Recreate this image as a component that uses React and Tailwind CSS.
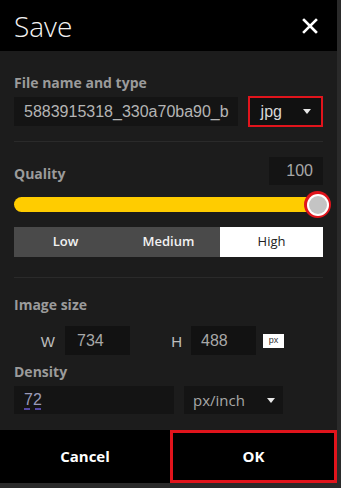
import React from "react";

const label = "font-['Open_Sans',sans-serif] font-bold text-[14px] text-[#9b9b9b] leading-none";

const Caret = () => (
  <svg width="8" height="5" viewBox="0 0 8 5" className="shrink-0">
    <path d="M0 0h8L4 5z" fill="#e8e8e8" />
  </svg>
);

export default function App() {
  return (
    <div className="w-[341px] h-[488px] bg-[#2a2a2a] flex flex-col overflow-hidden">
      <div className="w-[337px] flex-1 flex flex-col bg-[#1c1c1c]">
        {/* Header */}
        <div className="h-[51px] bg-black flex items-center justify-between pl-[14px] pr-[19px]">
          <span className="font-['Open_Sans',sans-serif] font-light text-[28px] text-[#f2f2f2] leading-none">Save</span>
          <svg width="16" height="16" viewBox="0 0 16 16">
            <path d="M2 2L14 14M14 2L2 14" stroke="#ffffff" strokeWidth="2.6" strokeLinecap="square" />
          </svg>
        </div>

        <div className="flex flex-col px-[14px]">
          {/* File name */}
          <div className={`${label} mt-[25px]`}>File name and type</div>
          <div className="flex items-center gap-[10px] mt-[6px]">
            <div className="w-[226px] h-[29px] bg-[#141414] flex items-center pl-[10px] font-['Liberation_Sans',sans-serif] text-[16px] text-[#b5b5b5] overflow-hidden whitespace-nowrap">
              5883915318_330a70ba90_b
            </div>
            <div className="w-[76px] h-[31px] border-[2px] border-[#e1141c] bg-[#111111] flex items-center justify-between pl-[11px] pr-[10px]">
              <span className="font-['Liberation_Sans',sans-serif] text-[16px] text-[#d8d8d8]">jpg</span>
              <Caret />
            </div>
          </div>
          <div className="h-px bg-[#2a2a2a] mt-[14px]" />

          {/* Quality */}
          <div className="flex items-center justify-between mt-[15px]">
            <span className={`${label} mt-[6px]`}>Quality</span>
            <div className="w-[54px] h-[28px] bg-[#141414] flex items-center justify-end pr-[10px] font-['Liberation_Sans',sans-serif] text-[16px] text-[#a8a8a8]">100</div>
          </div>
          <div className="relative h-[27px] mt-[6px] flex items-center">
            <div className="w-[312px] h-[15px] rounded-full bg-[#ffcc00]" />
            <div className="absolute right-[-8px] top-[0px] w-[27px] h-[27px] rounded-full bg-[#e0141c] flex items-center justify-center">
              <div className="w-[22px] h-[22px] rounded-full bg-white flex items-center justify-center">
                <div className="w-[18px] h-[18px] rounded-full bg-[#c4c4c4]" />
              </div>
            </div>
          </div>
          <div className="grid grid-cols-3 h-[30px] mt-[9px] font-['Open_Sans',sans-serif] text-[13px]">
            <div className="bg-[#4a4a4a] flex items-center justify-center font-semibold text-[#f2f2f2]">Low</div>
            <div className="bg-[#4a4a4a] flex items-center justify-center font-semibold text-[#f2f2f2]">Medium</div>
            <div className="bg-white flex items-center justify-center text-[#222222]">High</div>
          </div>
          <div className="h-px bg-[#2a2a2a] mt-[20px]" />

          {/* Image size */}
          <div className={`${label} mt-[20px]`}>Image size</div>
          <div className="flex items-center mt-[14px] font-['Liberation_Sans',sans-serif]">
            <span className="w-[51px] text-right pr-[10px] text-[15px] text-[#bdbdbd] mt-[4px]">W</span>
            <div className="w-[65px] h-[29px] bg-[#121212] flex items-center pl-[12px] text-[16px] text-[#a8a8a8]">734</div>
            <span className="w-[61px] text-right pr-[9px] text-[15px] text-[#bdbdbd] mt-[4px]">H</span>
            <div className="w-[65px] h-[29px] bg-[#121212] flex items-center pl-[10px] text-[16px] text-[#a8a8a8]">488</div>
            <div className="ml-[7px] w-[21px] h-[14px] bg-white flex items-center justify-center text-[9px] text-[#333333]">px</div>
          </div>

          {/* Density */}
          <div className={`${label} mt-[10px]`}>Density</div>
          <div className="flex items-center mt-[7px] gap-[10px]">
            <div className="w-[160px] h-[28px] bg-[#141414] flex items-center pl-[10px] font-['Liberation_Sans',sans-serif] text-[16px] text-[#9a9ab8]">
              <span className="underline decoration-dashed decoration-[#6b5bd6] underline-offset-[4px]">72</span>
            </div>
            <div className="w-[99px] h-[28px] bg-[#141414] flex items-center justify-between pl-[9px] pr-[8px] font-['Open_Sans',sans-serif] text-[15px] text-[#a8a8a8]">
              <span>px/inch</span>
              <Caret />
            </div>
          </div>
        </div>

        {/* Footer */}
        <div className="mt-auto h-[53px] bg-black flex font-['Open_Sans',sans-serif] font-bold text-[15px] text-white">
          <div className="w-[170px] flex items-center justify-center">Cancel</div>
          <div className="flex-1 border-[3px] border-[#e1141c] flex items-center justify-center">OK</div>
        </div>
        <div className="h-[5px] bg-[#2a2a2a]" />
      </div>
    </div>
  );
}
